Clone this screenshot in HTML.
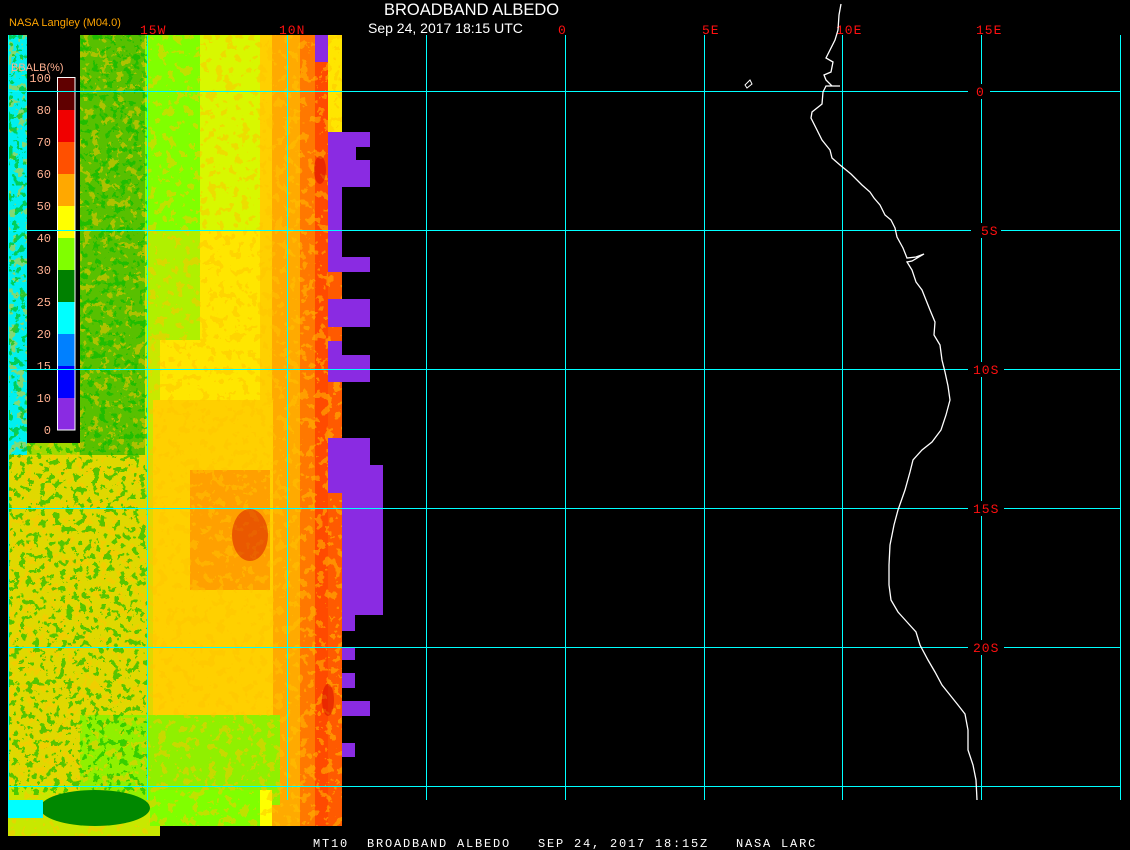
<!DOCTYPE html>
<html><head><meta charset="utf-8"><style>
html,body{margin:0;padding:0;background:#000;width:1130px;height:850px;overflow:hidden}
svg{display:block}
text{font-family:"Liberation Mono","DejaVu Sans Mono",monospace}
</style></head><body>
<svg width="1130" height="850" viewBox="0 0 1130 850">
<defs>
<filter id="n" x="0" y="0" width="100%" height="100%">
<feTurbulence type="fractalNoise" baseFrequency="0.12" numOctaves="3" seed="3"/>
<feComponentTransfer><feFuncA type="discrete" tableValues="0 0 0 0.85 0.85"/></feComponentTransfer>
<feColorMatrix type="matrix" values="0 0 0 0 1  0 0 0 0 0.55  0 0 0 0 0  0 0 0 1 0"/>
<feComposite in2="SourceGraphic" operator="in"/>
</filter>
<filter id="g" x="0" y="0" width="100%" height="100%">
<feTurbulence type="fractalNoise" baseFrequency="0.15" numOctaves="3" seed="8"/>
<feComponentTransfer><feFuncA type="discrete" tableValues="0 0 0 0.95 0.95"/></feComponentTransfer>
<feColorMatrix type="matrix" values="0 0 0 0 0  0 0 0 0 0.5  0 0 0 0 0  0 0 0 1 0"/>
<feComposite in2="SourceGraphic" operator="in"/>
</filter>
</defs>
<rect width="1130" height="850" fill="#000"/>
<!-- base bands -->
<rect x="8" y="35" width="152" height="801" fill="#c8e800"/>
<rect x="160" y="35" width="182" height="791" fill="#ffe600"/>
<rect x="8" y="35" width="19" height="420" fill="#00f0f0"/>
<rect x="27" y="35" width="53" height="420" fill="#a0d800"/>
<rect x="80" y="35" width="65" height="440" fill="#58c000"/>
<rect x="145" y="35" width="55" height="195" fill="#80ff00"/>
<rect x="200" y="35" width="60" height="195" fill="#d8f800"/>
<rect x="145" y="230" width="55" height="110" fill="#b0f000"/>
<rect x="260" y="35" width="12" height="765" fill="#ffd000"/>
<rect x="272" y="35" width="28" height="791" fill="#ffaa00"/>
<rect x="300" y="35" width="15" height="791" fill="#ff7800"/>
<rect x="315" y="62" width="13" height="764" fill="#ff4a00"/>
<rect x="328" y="187" width="14" height="639" fill="#ff5a00"/>
<!-- southern -->
<rect x="8" y="455" width="145" height="330" fill="#e0d800"/>
<rect x="153" y="400" width="120" height="320" fill="#ffd000"/>
<rect x="190" y="470" width="80" height="120" fill="#ffa000"/>
<rect x="80" y="715" width="200" height="90" fill="#90f000"/>
<rect x="150" y="790" width="110" height="36" fill="#80ff00"/>
<rect x="260" y="790" width="12" height="36" fill="#ffff00"/>
<!-- textures -->
<rect x="8" y="35" width="334" height="801" filter="url(#n)" fill="#fff" opacity="0.6"/>
<rect x="8" y="35" width="140" height="760" filter="url(#g)" fill="#fff" opacity="0.65"/>
<ellipse cx="95" cy="808" rx="55" ry="18" fill="#008800"/>
<rect x="8" y="800" width="35" height="18" fill="#00ffff"/>
<rect x="160" y="826" width="200" height="24" fill="#000"/>
<!-- dark red patches -->
<g fill="#d00000" opacity="0.45">
<ellipse cx="250" cy="535" rx="18" ry="26"/>
<ellipse cx="320" cy="170" rx="6" ry="14"/>
<ellipse cx="328" cy="700" rx="6" ry="16"/>
</g>
<!-- purple -->
<g fill="#8a2be2">
<rect x="315" y="35" width="13" height="27"/>
<rect x="328" y="132" width="42" height="15"/><rect x="328" y="147" width="28" height="13"/><rect x="328" y="160" width="42" height="27"/>
<rect x="328" y="187" width="14" height="70"/>
<rect x="328" y="257" width="42" height="15"/>
<rect x="328" y="299" width="42" height="28"/>
<rect x="328" y="341" width="14" height="14"/><rect x="328" y="355" width="42" height="27"/>
<rect x="328" y="438" width="42" height="27"/><rect x="328" y="465" width="55" height="28"/>
<rect x="342" y="493" width="41" height="122"/>
<rect x="342" y="615" width="13" height="16"/>
<rect x="342" y="647" width="13" height="13"/>
<rect x="342" y="673" width="13" height="15"/>
<rect x="342" y="701" width="28" height="15"/>
<rect x="342" y="743" width="13" height="14"/>
</g>
<!-- legend -->
<rect x="27" y="35" width="53" height="408" fill="#000"/>
<g>
<rect x="57" y="77" width="18" height="33" fill="#600000"/>
<rect x="57" y="110" width="18" height="32" fill="#f00000"/>
<rect x="57" y="142" width="18" height="32" fill="#ff5000"/>
<rect x="57" y="174" width="18" height="32" fill="#ffa800"/>
<rect x="57" y="206" width="18" height="32" fill="#ffff00"/>
<rect x="57" y="238" width="18" height="32" fill="#80ff00"/>
<rect x="57" y="270" width="18" height="32" fill="#008000"/>
<rect x="57" y="302" width="18" height="32" fill="#00ffff"/>
<rect x="57" y="334" width="18" height="32" fill="#0080ff"/>
<rect x="57" y="366" width="18" height="32" fill="#0000ff"/>
<rect x="57" y="398" width="18" height="32" fill="#8a2be2"/>
<rect x="57.5" y="77.5" width="17.5" height="352.5" fill="none" stroke="#fff" stroke-width="1"/>
</g>
<g fill="#ffb090" font-size="12" text-anchor="end" style="font-family:'Liberation Sans',sans-serif">
<text x="51" y="82">100</text><text x="51" y="114">80</text><text x="51" y="146">70</text><text x="51" y="178">60</text><text x="51" y="210">50</text><text x="51" y="242">40</text><text x="51" y="274">30</text><text x="51" y="306">25</text><text x="51" y="338">20</text><text x="51" y="370">15</text><text x="51" y="402">10</text><text x="51" y="434">0</text>
</g>
<text x="11" y="71" fill="#ffb090" font-size="11" style="font-family:'Liberation Sans',sans-serif">BBALB(%)</text>
<!-- grid -->
<g stroke="#00ffff" stroke-width="1">
<line x1="8.5" y1="35" x2="8.5" y2="800"/>
<line x1="147.5" y1="35" x2="147.5" y2="800" stroke-opacity="0.9"/>
<line x1="287.5" y1="35" x2="287.5" y2="800"/>
<line x1="426.5" y1="35" x2="426.5" y2="800"/>
<line x1="565.5" y1="35" x2="565.5" y2="800"/>
<line x1="704.5" y1="35" x2="704.5" y2="800"/>
<line x1="842.5" y1="35" x2="842.5" y2="800"/>
<line x1="981.5" y1="35" x2="981.5" y2="800"/>
<line x1="1120.5" y1="35" x2="1120.5" y2="800"/>
<line x1="8" y1="91.5" x2="1120" y2="91.5"/>
<line x1="8" y1="230.5" x2="1120" y2="230.5"/>
<line x1="8" y1="369.5" x2="1120" y2="369.5"/>
<line x1="8" y1="508.5" x2="1120" y2="508.5"/>
<line x1="8" y1="647.5" x2="1120" y2="647.5"/>
<line x1="8" y1="786.5" x2="1120" y2="786.5"/>
</g>
<rect x="27" y="35" width="53" height="2" fill="#000"/>
<g fill="#000">
<rect x="968" y="84" width="22" height="15"/><rect x="971" y="223" width="30" height="15"/><rect x="968" y="362" width="36" height="15"/><rect x="968" y="501" width="36" height="15"/><rect x="968" y="640" width="36" height="15"/>
</g>
<g fill="#ff1010" font-size="13" letter-spacing="1">
<text x="140" y="34">15W</text><text x="279" y="34">10N</text><text x="558" y="34">0</text><text x="702" y="34">5E</text><text x="836" y="34">10E</text><text x="976" y="34">15E</text>
<text x="976" y="96">0</text><text x="981" y="235">5S</text><text x="973" y="374">10S</text><text x="973" y="513">15S</text><text x="973" y="652">20S</text>
</g>
<!-- coast -->
<polyline fill="none" stroke="#fff" stroke-width="1.3" points="841,4 839,15 838,30 835,40 826,58 833,62 831,72 824,75 826,80 832,86 840,86 826,86 823,92 822,104 812,112 811,118 816,128 822,140 830,150 832,158 840,165 851,174 862,185 870,192 874,198 880,205 885,215 891,220 895,228 897,237 903,248 907,258 916,257 924,254 912,261 907,262 912,270 916,282 922,290 926,300 930,310 935,322 934,335 940,345 942,360 945,372 948,386 950,400 946,415 941,430 932,442 922,450 913,460 910,472 905,490 898,510 894,525 890,545 889,565 889,585 891,600 898,612 907,622 916,632 920,645 928,660 935,672 942,685 950,695 958,705 965,714 968,730 968,750 973,765 976,780 977,800"/>
<polygon points="745,85 750,80 752,84 747,88" fill="none" stroke="#fff" stroke-width="1"/>
<!-- titles -->
<text x="9" y="26" fill="#ffa500" font-size="11" style="font-family:'Liberation Sans',sans-serif">NASA Langley (M04.0)</text>
<text x="384" y="15" fill="#fff" font-size="16.5" style="font-family:'Liberation Sans',sans-serif">BROADBAND ALBEDO</text>
<text x="368" y="33" fill="#fff" font-size="14" style="font-family:'Liberation Sans',sans-serif">Sep 24, 2017 18:15 UTC</text>
<text x="313" y="847" fill="#fff" font-size="12" letter-spacing="1.8" xml:space="preserve">MT10  BROADBAND ALBEDO   SEP 24, 2017 18:15Z   NASA LARC</text>
</svg>
</body></html>
